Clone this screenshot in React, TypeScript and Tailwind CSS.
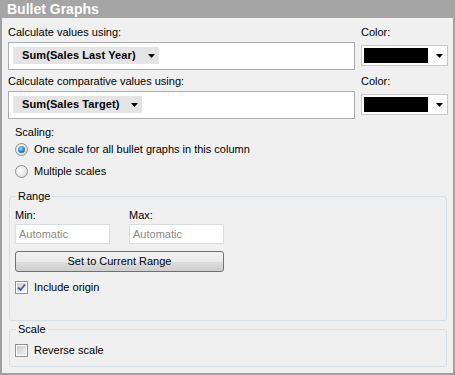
import React from 'react';

const Arrow = ({ className = '' }: { className?: string }) => (
  <svg width="8" height="4" viewBox="0 0 8 4" className={className}>
    <polygon points="0,0 7,0 3.5,4" fill="#000" />
  </svg>
);

const Chip = ({ text }: { text: string }) => (
  <div className="inline-flex items-center h-[17px] bg-[#e4e4e4] pl-[9px] pr-[3px] font-bold">
    <span className="tracking-[0.1px]">{text}</span>
    <Arrow className="ml-[12px]" />
  </div>
);

const ColorBox = ({ className = '' }: { className?: string }) => (
  <div className={`flex items-center h-[21px] border border-[#c9c9c9] bg-white p-[2px] ${className}`}>
    <div className="w-[64px] h-[15px] bg-black" />
    <Arrow className="ml-[8px]" />
  </div>
);

const Field = ({ label, value, className = '' }: { label: string; value: string; className?: string }) => (
  <div className={`grid grid-cols-[347px_87px] gap-x-[6px] ${className}`}>
    <div>{label}</div>
    <div>Color:</div>
    <div className="mt-[3px] h-[28px] border border-[#abadb3] bg-white pl-[4px] pt-[4px]">
      <Chip text={value} />
    </div>
    <ColorBox className="mt-[6px]" />
  </div>
);

const Radio = ({ checked, label, className = '' }: { checked?: boolean; label: string; className?: string }) => (
  <div className={`flex items-center ${className}`}>
    <div className="w-[13px] h-[13px] rounded-full border border-[#8e8f8f] bg-[radial-gradient(circle_at_40%_40%,#ffffff,#e6e6e6_60%,#cfcfcf)] flex items-center justify-center">
      {checked && (
        <div className="w-[7px] h-[7px] rounded-full bg-[radial-gradient(circle_at_40%_35%,#9fdcff,#2b7fc4_55%,#0d4a86)]" />
      )}
    </div>
    <span className="ml-[6px]">{label}</span>
  </div>
);

const Checkbox = ({ checked, label, className = '' }: { checked?: boolean; label: string; className?: string }) => (
  <div className={`flex items-center ${className}`}>
    <div className="w-[13px] h-[13px] border border-[#8e8f8f] bg-white p-px">
      <div className="w-full h-full bg-[linear-gradient(135deg,#cbcbcb,#f4f4f4)] flex items-center justify-center">
        {checked && (
          <svg width="9" height="9" viewBox="0 0 9 9">
            <path d="M1 4.5 L3.5 7 L8 1.5" fill="none" stroke="#4a5a8c" strokeWidth="1.8" />
          </svg>
        )}
      </div>
    </div>
    <span className="ml-[6px]">{label}</span>
  </div>
);

const TextBox = ({ label }: { label: string }) => (
  <div>
    <div>{label}</div>
    <div className="mt-[2px] h-[20px] border border-[#d9dde3] bg-white pl-[3px] leading-[18px] text-[#8a8a8a]">
      Automatic
    </div>
  </div>
);

export default function App() {
  return (
    <div className="w-[455px] h-[375px] flex flex-col bg-[#f0f0f0] font-['Liberation_Sans',Arial,sans-serif] text-[11px] leading-[13px] text-black">
      <div className="h-[18px] shrink-0 bg-[#a5a5a5] pl-[7px] text-white font-bold text-[14px] leading-[18px]">
        Bullet Graphs
      </div>
      <div className="flex-1 border-x-2 border-b-2 border-[#a0a0a0] pl-[6px]">
        <Field className="mt-[8px]" label="Calculate values using:" value="Sum(Sales Last Year)" />
        <Field className="mt-[5px]" label="Calculate comparative values using:" value="Sum(Sales Target)" />

        <div className="pl-[7px]">
          <div className="mt-[7px]">Scaling:</div>
          <Radio className="mt-[4px]" checked label="One scale for all bullet graphs in this column" />
          <Radio className="mt-[9px]" label="Multiple scales" />
        </div>

        <fieldset className="mt-[12px] ml-px w-[438px] h-[131px] border border-[#d5dfe5] rounded-[3px] pl-[5px] pt-[6px]">
          <legend className="ml-px px-[2px]">Range</legend>
          <div className="grid grid-cols-[95px_95px] gap-x-[19px]">
            <TextBox label="Min:" />
            <TextBox label="Max:" />
          </div>
          <button className="mt-[7px] w-[209px] h-[21px] border border-[#707070] rounded-[3px] bg-[linear-gradient(to_bottom,#f2f2f2_0%,#ebebeb_50%,#dddddd_51%,#cfcfcf_100%)] text-[11px] leading-[19px]">
            Set to Current Range
          </button>
          <Checkbox className="mt-[9px]" checked label="Include origin" />
        </fieldset>

        <fieldset className="mt-[2px] ml-px w-[438px] h-[44px] border border-[#d5dfe5] rounded-[3px] pl-[5px] pt-[8px]">
          <legend className="ml-px px-[2px]">Scale</legend>
          <Checkbox label="Reverse scale" />
        </fieldset>
      </div>
    </div>
  );
}
